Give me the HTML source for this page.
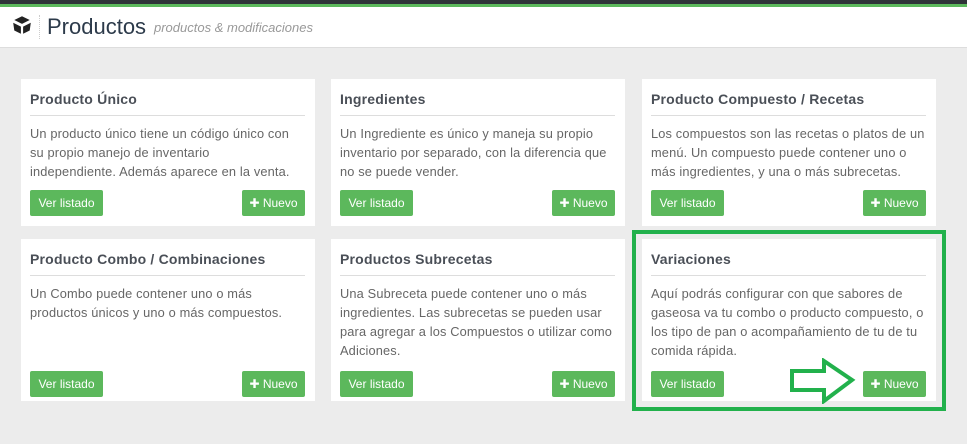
<!DOCTYPE html>
<html><head><meta charset="utf-8"><style>
*{box-sizing:border-box;margin:0;padding:0}
body{width:967px;height:444px;background:#ececec;font-family:"Liberation Sans",sans-serif;position:relative;overflow:hidden}
.top{position:absolute;left:0;top:0;width:967px;height:4px;background:#2e3338}
.gr{position:absolute;left:0;top:4px;width:967px;height:3px;background:#5cb85c}
.hdr{position:absolute;left:0;top:7px;width:967px;height:41px;background:#fff;border-bottom:1px solid #ddd}
.hdr h1{position:absolute;left:47px;top:7px;font-weight:normal;font-size:22px;color:#2c3a4a}
.hdr .sub{position:absolute;left:154px;top:13px;font-style:italic;font-size:13px;color:#999}
.sep{position:absolute;left:39px;top:8px;height:24px;border-left:1px dotted #ccc}
.card{position:absolute;background:#fff;width:294px}
.card h3{position:absolute;left:9px;top:12px;font-size:14px;color:#4a4f57;font-weight:bold;letter-spacing:0.2px}
.card hr{position:absolute;left:9px;right:10px;top:36px;border:0;border-top:1px solid #ddd}
.card p{position:absolute;left:9px;top:45px;font-size:12.8px;line-height:19px;color:#666;letter-spacing:0.15px;white-space:nowrap}
.btn{position:absolute;height:26px;background:#5cb85c;color:#fff;font-size:12px;line-height:26px;text-align:center;border-radius:2px}
.v{left:9px;width:73px}.n{right:10px;width:63px}
</style></head><body>
<div class="top"></div><div class="gr"></div>
<div class="hdr">
<svg style="position:absolute;left:11px;top:7px" width="22" height="22" viewBox="0 0 20 20"><path d="M10 2 L17 5.5 L10 9 L3 5.5Z" fill="#222"/><path d="M2 8 L9 11.5 L9 18 L3 15Z M18 8 L11 11.5 L11 18 L17 15Z" fill="#222"/></svg>
<div class="sep"></div>
<h1>Productos</h1><div class="sub">productos &amp; modificaciones</div></div>

<div class="card" style="left:21px;top:79px;height:147px"><h3>Producto Único</h3><hr><p>Un producto único tiene un código único con<br>su propio manejo de inventario<br>independiente. Además aparece en la venta.</p><div class="btn v" style="top:111px">Ver listado</div><div class="btn n" style="top:111px">✚ Nuevo</div></div>
<div class="card" style="left:331px;top:79px;height:147px"><h3>Ingredientes</h3><hr><p>Un Ingrediente es único y maneja su propio<br>inventario por separado, con la diferencia que<br>no se puede vender.</p><div class="btn v" style="top:111px">Ver listado</div><div class="btn n" style="top:111px">✚ Nuevo</div></div>
<div class="card" style="left:642px;top:79px;height:147px"><h3>Producto Compuesto / Recetas</h3><hr><p>Los compuestos son las recetas o platos de un<br>menú. Un compuesto puede contener uno o<br>más ingredientes, y una o más subrecetas.</p><div class="btn v" style="top:111px">Ver listado</div><div class="btn n" style="top:111px">✚ Nuevo</div></div>

<div class="card" style="left:21px;top:239px;height:162px"><h3>Producto Combo / Combinaciones</h3><hr><p>Un Combo puede contener uno o más<br>productos únicos y uno o más compuestos.</p><div class="btn v" style="top:132px">Ver listado</div><div class="btn n" style="top:132px">✚ Nuevo</div></div>
<div class="card" style="left:331px;top:239px;height:162px"><h3>Productos Subrecetas</h3><hr><p>Una Subreceta puede contener uno o más<br>ingredientes. Las subrecetas se pueden usar<br>para agregar a los Compuestos o utilizar como<br>Adiciones.</p><div class="btn v" style="top:132px">Ver listado</div><div class="btn n" style="top:132px">✚ Nuevo</div></div>
<div class="card" style="left:642px;top:239px;height:162px"><h3>Variaciones</h3><hr><p>Aquí podrás configurar con que sabores de<br>gaseosa va tu combo o producto compuesto, o<br>los tipo de pan o acompañamiento de tu de tu<br>comida rápida.</p><div class="btn v" style="top:132px">Ver listado</div><div class="btn n" style="top:132px">✚ Nuevo</div></div>

<div style="position:absolute;left:632px;top:230px;width:314px;height:181px;border:4px solid #22b14c"></div>
<svg style="position:absolute;left:788px;top:358px" width="70" height="46" viewBox="0 0 70 46"><path d="M4 13 H36 V3 L64 22 L36 43 V32 H4Z" fill="none" stroke="#22b14c" stroke-width="4" stroke-linejoin="miter"/></svg>
</body></html>
